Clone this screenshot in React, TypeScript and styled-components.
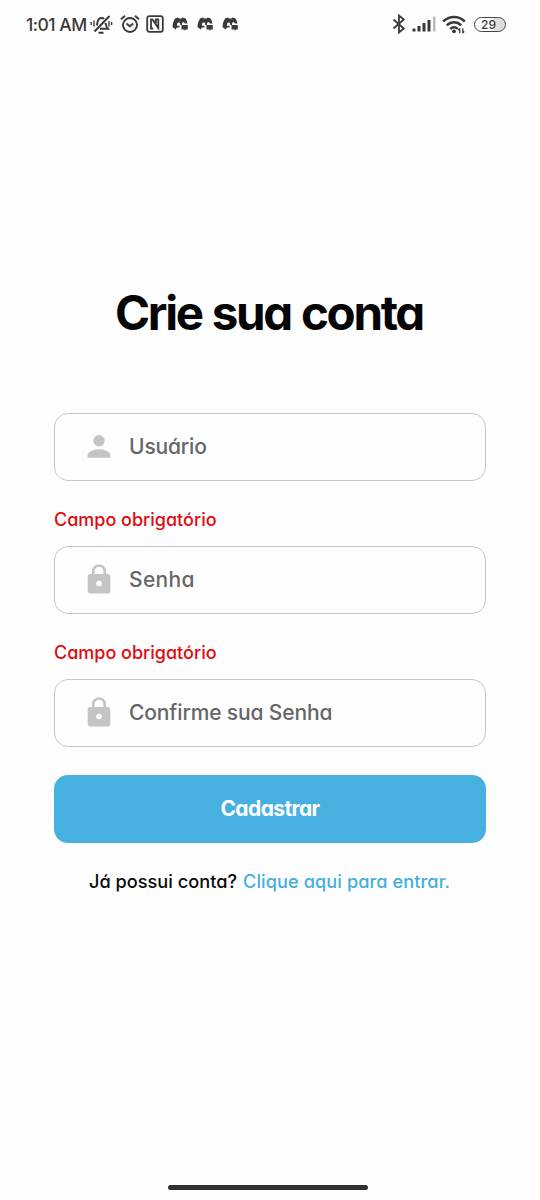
import React from 'react';
import styled, { createGlobalStyle } from 'styled-components';

const GlobalStyle = createGlobalStyle`
  * { box-sizing: border-box; }
  body {
    margin: 0;
    background: #fefefe;
    font-family: Inter, "Liberation Sans", sans-serif;
    font-feature-settings: "cv11" 1;
  }
`;

const Screen = styled.div`
  width: 540px;
  height: 1200px;
  display: flex;
  flex-direction: column;
  overflow: hidden;
`;

const StatusBar = styled.header`
  height: 48px;
  padding: 0 34px 0 26px;
  display: flex;
  align-items: center;
  justify-content: space-between;
  color: #3a3a3a;
  svg { display: block; flex: none; }
`;

const StatusGroup = styled.div`
  display: flex;
  align-items: center;
`;

const Clock = styled.time`
  width: 64px;
  font-size: 17.5px;
  font-weight: 500;
  letter-spacing: -0.5px;
  white-space: nowrap;
`;

const Battery = styled.div`
  width: 32px;
  height: 15px;
  margin-left: 8px;
  padding-right: 3px;
  border: 1.5px solid #444;
  border-radius: 8px;
  background: linear-gradient(90deg, #fefefe 62%, #ddd 62%);
  display: flex;
  align-items: center;
  justify-content: center;
  font-size: 12px;
  font-weight: 500;
`;

const Content = styled.main`
  flex: 1;
  padding: 235px 54px 0;
  display: flex;
  flex-direction: column;
`;

const Title = styled.h1`
  margin: 0 0 69.5px;
  height: 60px;
  line-height: 60px;
  font-size: 47.5px;
  font-weight: 700;
  letter-spacing: -2.3px;
  word-spacing: 1px;
  text-indent: -2px;
  color: #050505;
  text-align: center;
  white-space: nowrap;
`;

const Field = styled.label`
  height: 68px;
  padding: 0 0 1px 27px;
  display: flex;
  align-items: center;
  gap: 13px;
  border: 1.3px solid #c6c6c6;
  border-radius: 14px;
  color: #c4c4c4;
  svg { flex: none; }
`;

const Placeholder = styled.span<{ $spacing: number }>`
  font-size: 21px;
  font-weight: 500;
  letter-spacing: ${(p) => p.$spacing}px;
  color: #666;
  white-space: nowrap;
`;

const ErrorText = styled.p`
  margin: 27px 0 14px;
  height: 24px;
  line-height: 24px;
  font-size: 18px;
  font-weight: 500;
  letter-spacing: 0;
  color: #e20a0d;
  white-space: nowrap;
`;

const SubmitButton = styled.button`
  height: 68.5px;
  margin-top: 28px;
  padding: 0;
  border: 0;
  border-radius: 14px;
  background: #46b1e0;
  color: #fff;
  font: inherit;
  font-size: 21px;
  font-weight: 700;
  letter-spacing: -0.6px;
`;

const Footer = styled.p`
  margin: 26px 0 0 35px;
  height: 24px;
  line-height: 24px;
  display: flex;
  gap: 6px;
  font-size: 18.2px;
  font-weight: 500;
  color: #0a0a0a;
  white-space: nowrap;
`;

const Question = styled.span`
  width: 148px;
  letter-spacing: 0;
`;

const Link = styled.a`
  letter-spacing: 0.07px;
  color: #46aedb;
`;

const HomeIndicator = styled.div`
  width: 200px;
  height: 5px;
  margin: 0 0 10px 168px;
  border-radius: 3px;
  background: #303030;
`;

const PersonIcon = () => (
  <svg width="34" height="34" viewBox="0 0 24 24" fill="currentColor">
    <path d="M12 12.300a4 4 0 1 0 0-8 4 4 0 0 0 0 8zm0 2c-2.67 0-8 1.34-8 4v2h16v-2c0-2.66-5.33-4-8-4z" />
  </svg>
);

const LockIcon = () => (
  <svg width="34" height="34" viewBox="0 0 24 24" fill="currentColor">
    <path d="M18 8.500h-1V6.500A5 5 0 0 0 7 6.500v2H6a2 2 0 0 0-2 2v9.800a2 2 0 0 0 2 2h12a2 2 0 0 0 2-2V10.500a2 2 0 0 0-2-2zm-6 8.700a2 2 0 1 1 0-4 2 2 0 0 1 0 4zm3.100-8.700H8.900V6.500a3.100 3.100 0 0 1 6.200 0v2z" />
  </svg>
);

const MutedBellIcon = () => (
  <svg width="23" height="22" viewBox="0 0 23 22" fill="none" stroke="currentColor" strokeWidth="2">
    <path d="M19.500 3 4.500 18.500M6.800 12.500c.6-1.500.5-3 1-4.500.6-2 1.800-3 3.700-3 1.100 0 2 .3 2.600.9M15.500 10c.2 2 .8 3.800 2.600 5.800H10M8.500 19.800h5" />
    <path d="M4 7.500v6M1.200 9v3M19 8v5.500M21.600 9v3" strokeWidth="1.400" />
  </svg>
);

const AlarmIcon = () => (
  <svg width="20" height="20" viewBox="0 0 20 20" fill="none" stroke="currentColor" strokeWidth="1.900">
    <circle cx="10" cy="11" r="7" />
    <path d="M1 5.200 5 1.700M19 5.200l-4-3.500M6.500 9.500l3.300 2.700 3.500-2.700" />
  </svg>
);

const NfcIcon = () => (
  <svg width="18" height="18" viewBox="0 0 18 18" fill="none" stroke="currentColor" strokeWidth="1.800">
    <rect x="1.200" y="1.200" width="15.600" height="15.600" rx="2" />
    <path d="M7.200 13.500H5V4.500h1.500l5.800 8.500V4.500H9.800v4" />
  </svg>
);

const ControllerIcon = () => (
  <svg width="17" height="14" viewBox="0 0 17 14">
    <path
      fill="currentColor"
      d="M3.300 1.300 6 .6l1 .9h2.500l1-.9 2.700.7c1.400 1.800 2 3.400 2.300 5.200h-2.700c-.3-1.700-2.400-1.700-2.800 0V8H8.200V6.700C8 5 5 5.200 5 7.500v1.300h2.500v1.700H4.800l-1 1.900L.6 10.300C.5 6.500 1.500 3.700 3.300 1.300z"
    />
    <path fill="currentColor" d="M9.500 8h6.300v4.500h-1.800l-1.500 1.300v-1.300h-3z" />
  </svg>
);

const BluetoothIcon = () => (
  <svg width="14" height="20" viewBox="0 0 14 20" fill="none" stroke="currentColor" strokeWidth="1.800">
    <path d="m1.500 5.500 10.300 9L7 18.500v-17l4.800 4-10.300 9" />
  </svg>
);

const SignalIcon = () => (
  <svg width="25" height="16" viewBox="0 0 25 16" fill="currentColor">
    <rect x="0.500" y="12.500" width="3" height="3" rx=".6" />
    <rect x="5.500" y="10" width="3" height="5.500" rx=".6" />
    <rect x="10.500" y="7" width="3" height="8.500" rx=".6" />
    <rect x="15.500" y="4" width="3" height="11.500" rx=".6" />
    <rect x="21" y="0.500" width="2.500" height="15" rx=".6" fill="#bbb" />
  </svg>
);

const WifiIcon = () => (
  <svg width="24" height="19" viewBox="0 0 24 19" fill="none" stroke="currentColor" strokeWidth="2.500">
    <path d="M1.200 6.500c6.200-6 15.400-6 21.600 0M4.700 10.300c4.300-4 10.300-4 14.600 0M8.200 13.900c2.300-2 5.300-2 7.600 0" />
    <circle cx="12" cy="16.300" r="1.900" fill="currentColor" stroke="none" />
    <path d="M17.700 13.200v5M20.800 13.200v5M16.300 15l1.400-1.700M22.200 16.400l-1.400 1.700" strokeWidth="1.300" />
  </svg>
);

const StatusIcons = styled(StatusGroup)`
  gap: 6.5px;
`;

const ConnectionIcons = styled(StatusGroup)`
  gap: 5.5px;
`;

const AppIcons = styled(StatusGroup)`
  gap: 8px;
  margin-left: 1.5px;
`;

const FieldRow = ({ icon, text, spacing }: { icon: React.ReactNode; text: string; spacing: number }) => (
  <Field>
    {icon}
    <Placeholder $spacing={spacing}>{text}</Placeholder>
  </Field>
);

export default function App() {
  return (
    <Screen>
      <GlobalStyle />
      <StatusBar>
        <StatusGroup>
          <Clock>1:01 AM</Clock>
          <StatusIcons>
            <MutedBellIcon />
            <AlarmIcon />
            <NfcIcon />
            <AppIcons>
              <ControllerIcon />
              <ControllerIcon />
              <ControllerIcon />
            </AppIcons>
          </StatusIcons>
        </StatusGroup>
        <StatusGroup>
          <ConnectionIcons>
            <BluetoothIcon />
            <SignalIcon />
            <WifiIcon />
          </ConnectionIcons>
          <Battery>29</Battery>
        </StatusGroup>
      </StatusBar>
      <Content>
        <Title>Crie sua conta</Title>
        <FieldRow icon={<PersonIcon />} text="Usuário" spacing={-0.15} />
        <ErrorText>Campo obrigatório</ErrorText>
        <FieldRow icon={<LockIcon />} text="Senha" spacing={0.35} />
        <ErrorText>Campo obrigatório</ErrorText>
        <FieldRow icon={<LockIcon />} text="Confirme sua Senha" spacing={-0.13} />
        <SubmitButton>Cadastrar</SubmitButton>
        <Footer>
          <Question>Já possui conta?</Question>
          <Link>Clique aqui para entrar.</Link>
        </Footer>
      </Content>
      <HomeIndicator />
    </Screen>
  );
}
